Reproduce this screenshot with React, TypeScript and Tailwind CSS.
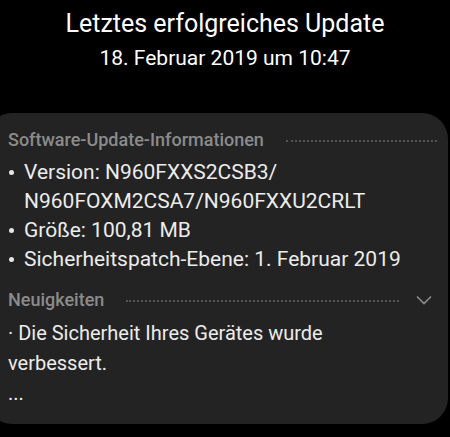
import React from "react";

const font = { fontFamily: "Roboto, 'Noto Sans', sans-serif" };

function Bullet({ children }: { children: React.ReactNode }) {
  return (
    <div className="flex">
      <span className="w-[16px] shrink-0 flex justify-start pt-[12px] pl-[1px]">
        <span className="block w-[5px] h-[5px] rounded-full bg-[#e6e6e6]" />
      </span>
      <span>{children}</span>
    </div>
  );
}

export default function App() {
  return (
    <div
      className="w-[450px] h-[437px] bg-black overflow-hidden flex flex-col text-[#ececec]"
      style={font}
    >
      <div className="pt-[9px] flex flex-col items-center">
        <div className="text-[25px] leading-[30px] text-white">Letztes erfolgreiches Update</div>
        <div className="mt-[5px] text-[21px] leading-[28px] text-white">18. Februar 2019 um 10:47</div>
      </div>
      <div className="mt-[41px] ml-[-14px] w-[462px] h-[311px] rounded-[26px] bg-[#232323] pt-[15px] pl-[22px] pr-[15px]">
        <div className="flex items-center gap-[22px] h-[24px] mr-[-4px]">
          <span className="text-[18px] leading-[24px] font-medium text-[#8b8b8b] whitespace-nowrap">
            Software-Update-Informationen
          </span>
          <div className="flex-1 border-t-2 border-dotted border-[#555555] mt-[1px]" />
        </div>
        <div className="mt-[6px] text-[21px] leading-[29px]">
          <Bullet>
            Version: N960FXXS2CSB3/
            <br />
            N960FOXM2CSA7/N960FXXU2CRLT
          </Bullet>
          <Bullet>Größe: 100,81 MB</Bullet>
          <Bullet>Sicherheitspatch-Ebene: 1. Februar 2019</Bullet>
        </div>
        <div className="mt-[14px] flex items-center h-[24px]">
          <span className="text-[18px] leading-[24px] font-medium text-[#8b8b8b]">Neuigkeiten</span>
          <div className="ml-[22px] flex-1 border-t-2 border-dotted border-[#555555] mt-[1px]" />
          <svg width="16" height="10" viewBox="0 0 16 10" className="ml-[17px] mr-[1px]">
            <polyline points="1,1.5 8,8.5 15,1.5" fill="none" stroke="#8b8b8b" strokeWidth="1.6" />
          </svg>
        </div>
        <div className="mt-[6px] text-[20px] leading-[30px]">
          <div>· Die Sicherheit Ihres Gerätes wurde</div>
          <div>verbessert.</div>
          <div>...</div>
        </div>
      </div>
    </div>
  );
}
